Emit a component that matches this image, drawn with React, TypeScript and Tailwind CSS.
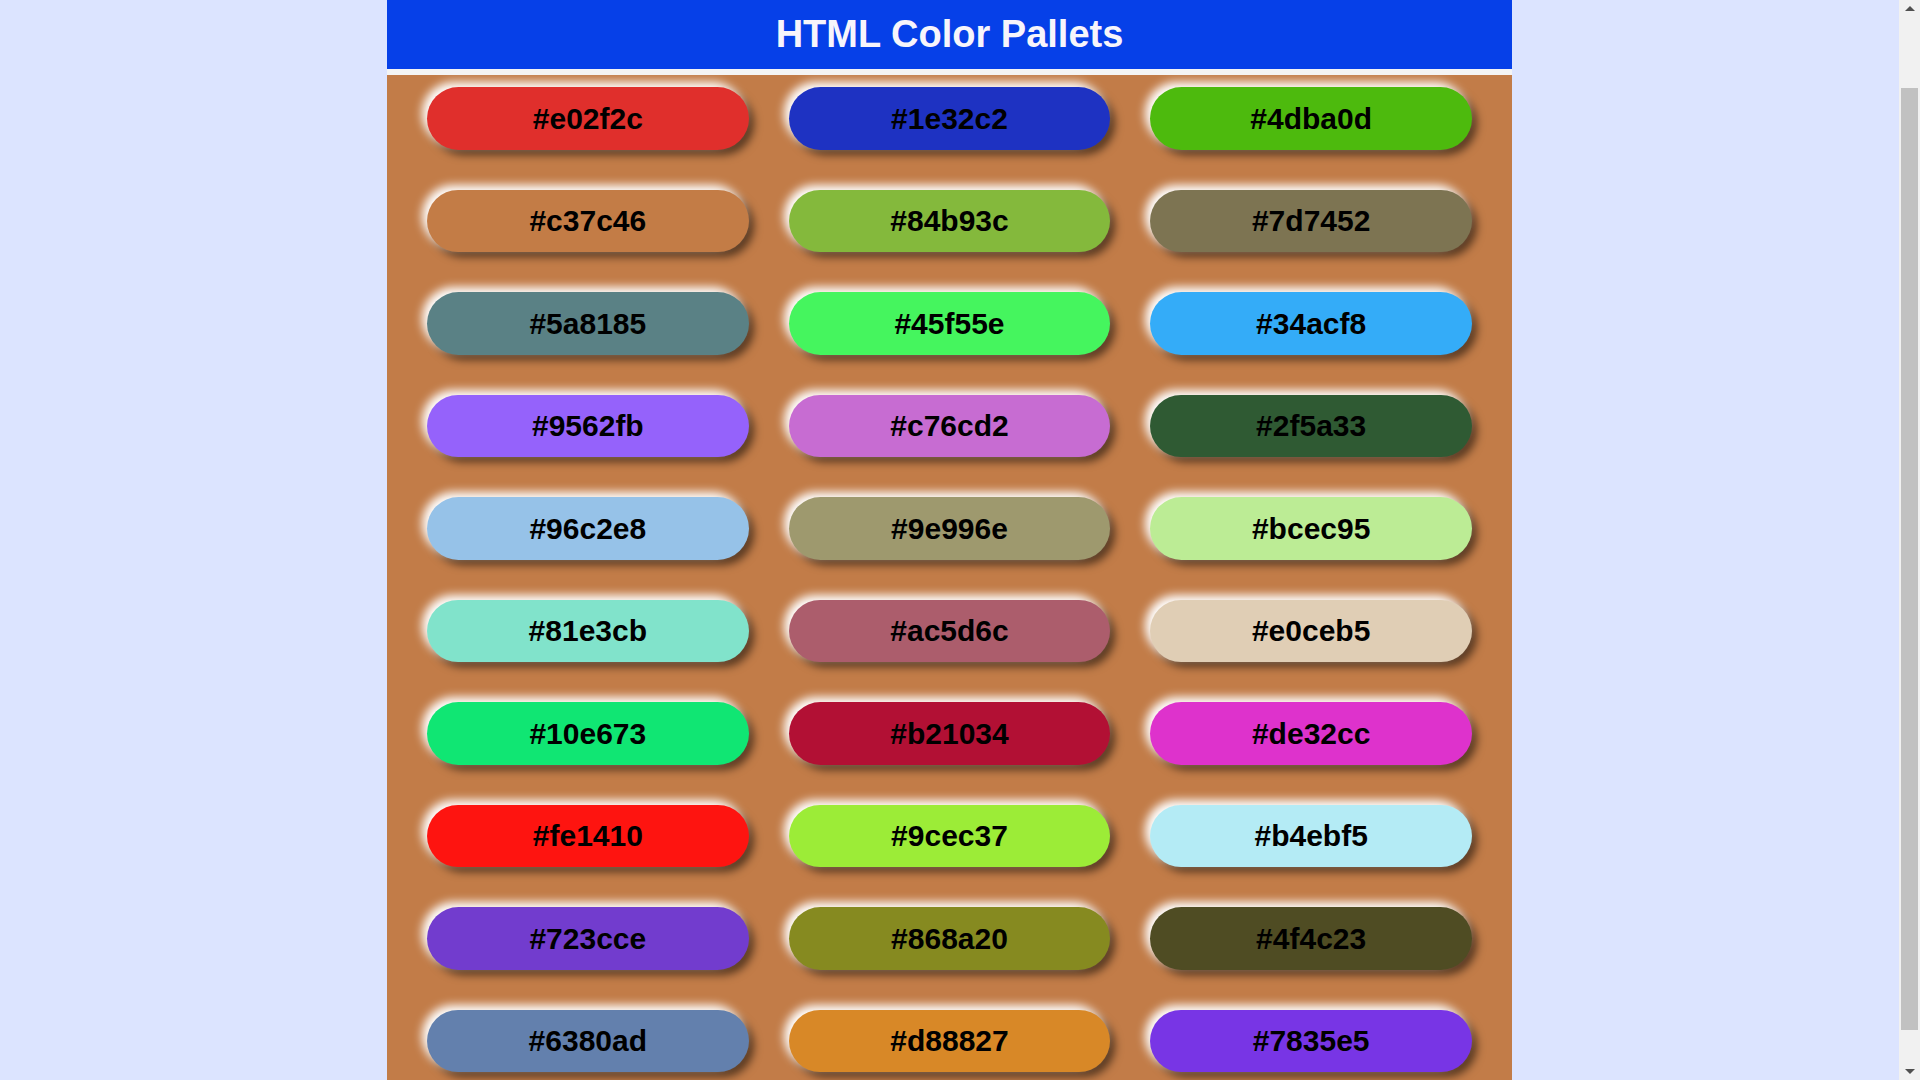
const colors = [
  "#e02f2c", "#1e32c2", "#4dba0d",
  "#c37c46", "#84b93c", "#7d7452",
  "#5a8185", "#45f55e", "#34acf8",
  "#9562fb", "#c76cd2", "#2f5a33",
  "#96c2e8", "#9e996e", "#bcec95",
  "#81e3cb", "#ac5d6c", "#e0ceb5",
  "#10e673", "#b21034", "#de32cc",
  "#fe1410", "#9cec37", "#b4ebf5",
  "#723cce", "#868a20", "#4f4c23",
  "#6380ad", "#d88827", "#7835e5",
];

const Pallet = ({ color }: { color: string }) => {
  return (
    <div
      className="flex h-[62.5px] items-center justify-center rounded-full text-[30px] font-bold text-black shadow-[-5px_-5px_10px_#fff,5px_5px_9px_rgba(0,0,0,0.55)]"
      style={{ backgroundColor: color }}
    >
      {color}
    </div>
  );
};

// browser scrollbar as it shows in the screenshot
const Scrollbar = () => {
  return (
    <div className="flex h-screen w-[21px] shrink-0 flex-col items-center bg-[#f1f1f1]">
      <div className="flex h-[17px] items-center justify-center">
        <div className="h-0 w-0 border-x-[5px] border-b-[5px] border-x-transparent border-b-[#505050]" />
      </div>
      <div className="mt-[71px] h-[942px] w-[17px] bg-[#c1c1c1]" />
      <div className="flex-1" />
      <div className="flex h-[17px] items-center justify-center">
        <div className="h-0 w-0 border-x-[5px] border-t-[5px] border-x-transparent border-t-[#505050]" />
      </div>
    </div>
  );
};

const App = () => {
  return (
    <div className="flex h-screen overflow-hidden bg-[#dce4ff] font-['Liberation_Sans',Arial,sans-serif]">
      <div className="flex-1">
        <div className="mx-auto w-[1125px]">
          <header className="flex h-[69px] items-center justify-center bg-[#0640e8]">
            <h1 className="text-[38px] font-bold text-[#f7f5fb]">HTML Color Pallets</h1>
          </header>
          <div className="h-[6px] bg-[#f4f4f4]" />
          {/* pallet grid */}
          <div className="grid grid-cols-3 gap-x-[40px] gap-y-[40px] bg-[#c27c48] px-[40px] pt-[12px] pb-[38px]">
            {colors.map((c) => (
              <Pallet key={c} color={c} />
            ))}
          </div>
        </div>
      </div>
      <Scrollbar />
    </div>
  );
};

export default App;
